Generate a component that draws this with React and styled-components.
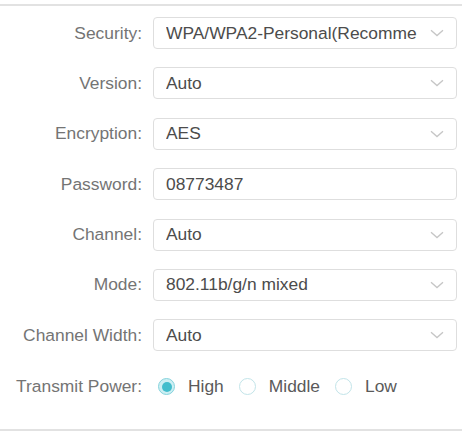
import React from 'react'
import styled, { createGlobalStyle } from 'styled-components'

const GlobalStyle = createGlobalStyle`
  html, body {
    margin: 0;
    padding: 0;
    background: #fff;
  }
  body {
    font-family: "Liberation Sans", Arial, sans-serif;
  }
`

const Panel = styled.div`
  width: 462px;
  height: 431px;
  box-sizing: border-box;
  padding-top: 4px;
  display: flex;
  flex-direction: column;
  background: #fff;
`

const Rule = styled.div`
  height: 2px;
  background: #e2e2e2;
  flex: 0 0 auto;
`

const Form = styled.div`
  flex: 1 1 auto;
  padding-top: 11px;
  display: flex;
  flex-direction: column;
  gap: 18.4px;
`

const Row = styled.div`
  display: flex;
  align-items: center;
  height: ${({ $tall }) => ($tall ? '36px' : '32px')};
  margin-top: ${({ $tall }) => ($tall ? '-1px' : '0')};
`

const Label = styled.div`
  width: 142px;
  flex: 0 0 auto;
  padding-right: 11px;
  box-sizing: content-box;
  text-align: right;
  color: #747474;
  font-size: 17.4px;
  white-space: nowrap;
`

const Field = styled.div`
  width: 304px;
  height: 32px;
  box-sizing: border-box;
  border: 1px solid #dedede;
  border-radius: 4px;
  display: flex;
  align-items: center;
  padding: 0 12px 0 12px;
  color: #4c4c4c;
  font-size: 17.4px;
  overflow: hidden;
`

const Value = styled.span`
  flex: 1 1 auto;
  white-space: nowrap;
  overflow: hidden;
`

const Chevron = styled.svg`
  flex: 0 0 auto;
  margin-left: 8px;
  width: 14px;
  height: 8px;
`

const RadioGroup = styled.div`
  display: flex;
  align-items: center;
  padding-left: 5px;
`

const RadioItem = styled.label`
  display: flex;
  align-items: center;
  gap: 13px;
  margin-right: 15px;
  color: #5a5a5a;
  font-size: 17.4px;
`

const RadioDot = styled.span`
  width: 17px;
  height: 17px;
  box-sizing: border-box;
  border-radius: 50%;
  border: 1.5px solid ${({ $on }) => ($on ? '#86d3dd' : '#c2e4e9')};
  background: ${({ $on }) => ($on ? '#cdeff3' : '#fff')};
  display: flex;
  align-items: center;
  justify-content: center;

  &::after {
    content: '';
    width: 10px;
    height: 10px;
    border-radius: 50%;
    background: ${({ $on }) => ($on ? '#42bdcc' : 'transparent')};
  }
`

const Arrow = () => (
  <Chevron viewBox="0 0 14 8">
    <path d="M1 1.2 L7 6.6 L13 1.2" fill="none" stroke="#c6c6c6" strokeWidth="1.3" />
  </Chevron>
)

const fields = [
  { label: 'Security:', value: 'WPA/WPA2-Personal(Recomme', select: true },
  { label: 'Version:', value: 'Auto', select: true },
  { label: 'Encryption:', value: 'AES', select: true },
  { label: 'Password:', value: '08773487', select: false },
  { label: 'Channel:', value: 'Auto', select: true },
  { label: 'Mode:', value: '802.11b/g/n mixed', select: true },
  { label: 'Channel Width:', value: 'Auto', select: true },
]

const powers = ['High', 'Middle', 'Low']

const App = () => (
  <>
    <GlobalStyle />
    <Panel>
      <Rule />
      <Form>
        {fields.map((f) => (
          <Row key={f.label}>
            <Label>{f.label}</Label>
            <Field>
              <Value>{f.value}</Value>
              {f.select && <Arrow />}
            </Field>
          </Row>
        ))}
        <Row $tall>
          <Label>Transmit Power:</Label>
          <RadioGroup>
            {powers.map((p) => (
              <RadioItem key={p}>
                <RadioDot $on={p === 'High'} />
                {p}
              </RadioItem>
            ))}
          </RadioGroup>
        </Row>
      </Form>
      <Rule />
    </Panel>
  </>
)

export default App
